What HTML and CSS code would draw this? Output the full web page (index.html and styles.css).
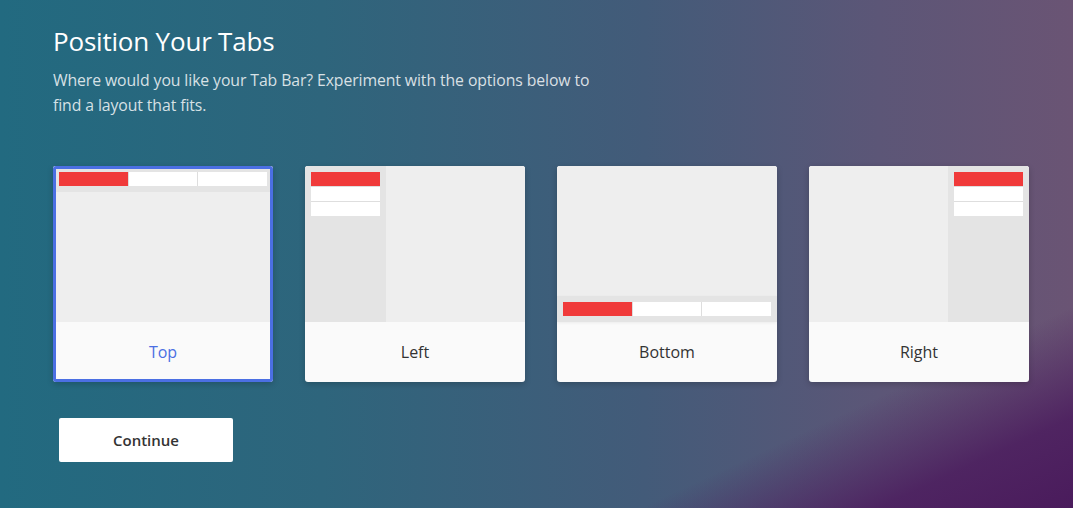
FILE: index.html
```html
<!DOCTYPE html>
<html>
<head>
    <meta charset="utf-8">
    <link rel="stylesheet" href="styles.css">
</head>
<body>
<div class="page">
    <h1 class="title">Position Your Tabs</h1>
    <p class="lead">Where would you like your Tab Bar? Experiment with the options below to find a layout that fits.</p>

    <div class="options">
        <!-- Top -->
        <div class="option selected">
            <div class="preview preview-top">
                <div class="tabbar">
                    <span class="tab active"></span>
                    <span class="tab"></span>
                    <span class="tab"></span>
                </div>
                <div class="content"></div>
            </div>
            <div class="label">Top</div>
        </div>

        <!-- Left -->
        <div class="option">
            <div class="preview preview-left">
                <div class="sidebar">
                    <span class="tab active"></span>
                    <span class="tab"></span>
                    <span class="tab"></span>
                </div>
                <div class="content"></div>
            </div>
            <div class="label">Left</div>
        </div>

        <!-- Bottom -->
        <div class="option">
            <div class="preview preview-bottom">
                <div class="content"></div>
                <div class="tabbar">
                    <span class="tab active"></span>
                    <span class="tab"></span>
                    <span class="tab"></span>
                </div>
            </div>
            <div class="label">Bottom</div>
        </div>

        <!-- Right -->
        <div class="option">
            <div class="preview preview-right">
                <div class="content"></div>
                <div class="sidebar">
                    <span class="tab active"></span>
                    <span class="tab"></span>
                    <span class="tab"></span>
                </div>
            </div>
            <div class="label">Right</div>
        </div>
    </div>

    <button class="continue-btn">Continue</button>
</div>
</body>
</html>
```

FILE: styles.css
```css
html, body {
    height: 100%;
}
body {
    margin: 0;
    font-family: 'Open Sans', 'Noto Sans', sans-serif;
    color: white;
    background:
        linear-gradient(155deg, rgba(75, 28, 94, 0) 80%, rgba(75, 28, 94, 0.85) 91%, #4a1b5c 100%),
        linear-gradient(90deg, #226a80 0%, #2e657c 30%, #435b79 60%, #5c5677 82%, #6a5474 100%);
    overflow: hidden;
}
.page {
    padding: 24px 0 0 53px;
}

.title {
    margin: 0;
    font-size: 26px;
    font-weight: 400;
    line-height: 34px;
    letter-spacing: -0.2px;
}
.lead {
    margin: 10px 0 0;
    width: 555px;
    font-size: 15.8px;
    line-height: 25px;
    color: rgba(255, 255, 255, 0.82);
    letter-spacing: -0.1px;
}

/* Layout option cards */
.options {
    display: flex;
    gap: 32px;
    margin-top: 48px;
}
.option {
    flex-shrink: 0;
    width: 220px;
    height: 216px;
    border-radius: 3px;
    overflow: hidden;
    background: #fafafa;
    box-shadow: 0 2px 6px rgba(0, 0, 0, 0.2);
    display: flex;
    flex-direction: column;
}
.option.selected {
    outline: 3px solid #4b6fe3;
    outline-offset: -3px;
}
.preview {
    height: 156px;
    display: flex;
    background: #eeeeee;
}
.preview-top, .preview-bottom {
    flex-direction: column;
}
.content {
    flex: 1;
    background: #eeeeee;
}
.tabbar {
    display: flex;
    padding: 6px;
    background: #e4e4e4;
    box-shadow: 0 1px 3px rgba(0, 0, 0, 0.06);
}
.tabbar .tab {
    flex: 1;
    height: 14px;
    background: white;
    border-left: 1px solid #dedede;
}
.tabbar .tab:first-child {
    border-left: none;
}
.sidebar {
    width: 69px;
    padding: 6px;
    background: #e4e4e4;
    display: flex;
    flex-direction: column;
}
.sidebar .tab {
    height: 14px;
    background: white;
    border-top: 1px solid #dedede;
}
.sidebar .tab:first-child {
    border-top: none;
}
.tab.active {
    background: #f03a3a;
}
.label {
    flex: 1;
    display: flex;
    align-items: center;
    justify-content: center;
    font-size: 16px;
    color: #333;
}
.selected .label {
    color: #4b6fe3;
}

.continue-btn {
    margin: 36px 0 0 6px;
    width: 174px;
    height: 44px;
    border: none;
    border-radius: 2px;
    background: white;
    color: #333;
    font-family: 'Open Sans', 'Noto Sans', sans-serif;
    font-size: 15px;
    font-weight: 600;
    cursor: pointer;
}
```
